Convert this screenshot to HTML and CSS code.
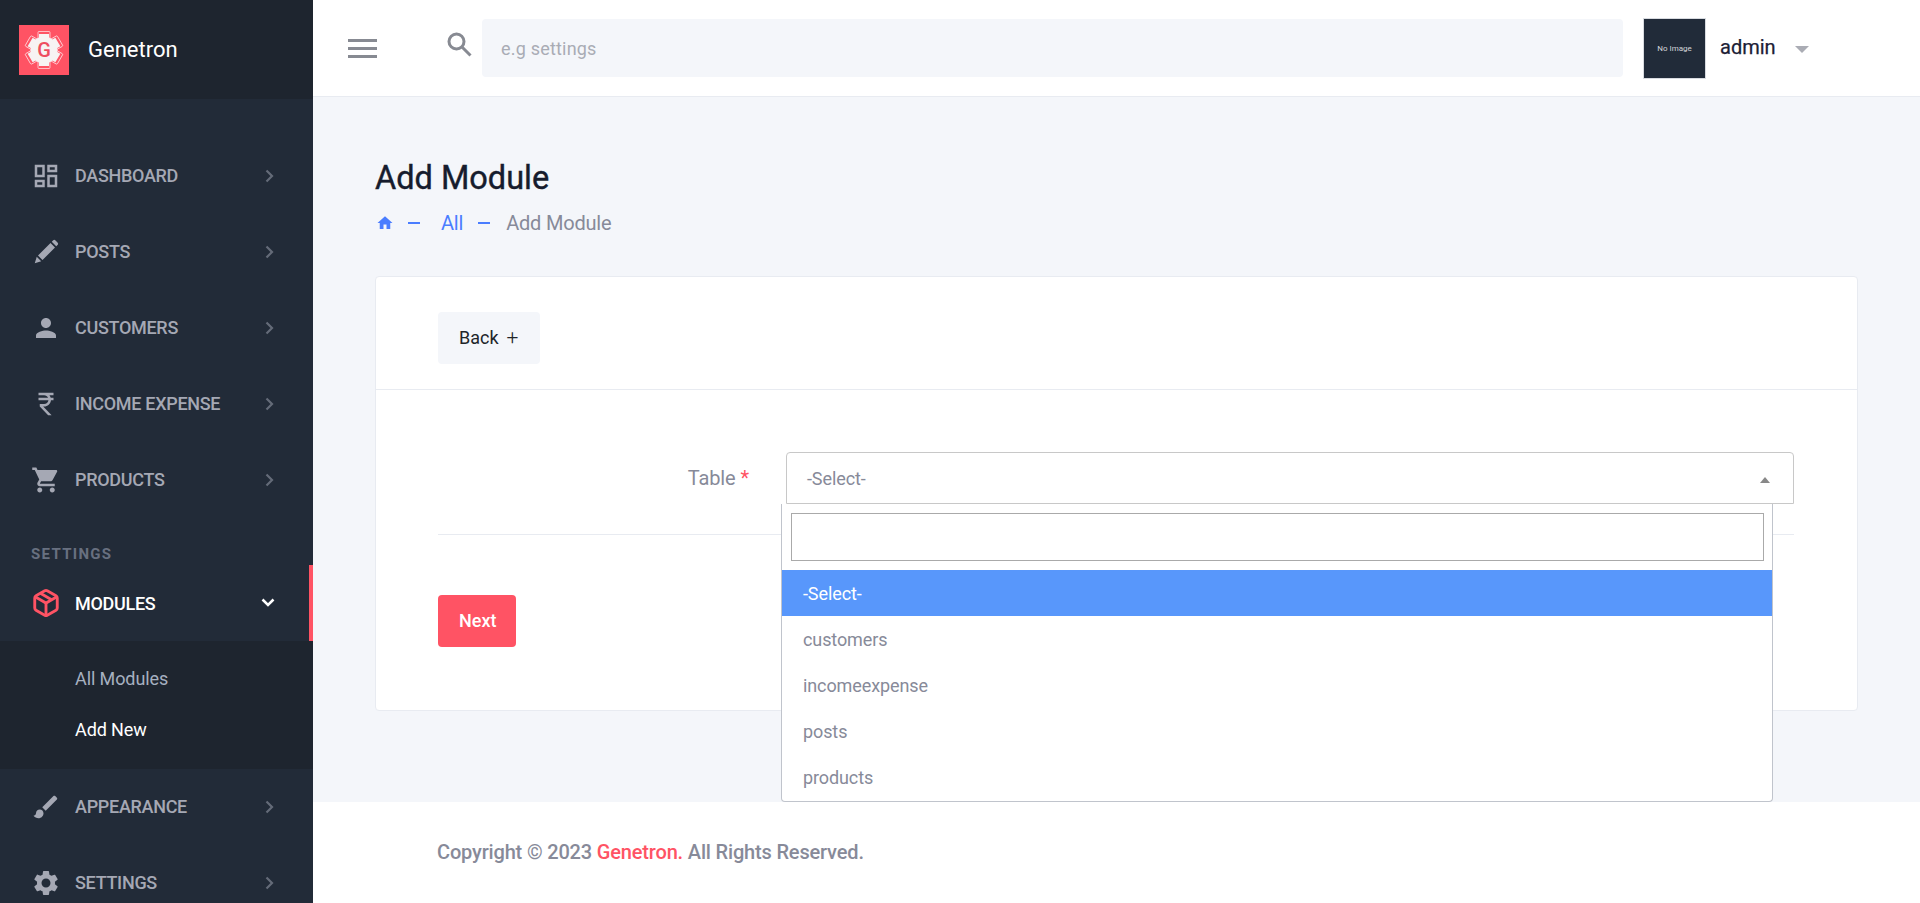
FILE: index.html
```html
<!DOCTYPE html>
<html lang="en">
<head>
<meta charset="utf-8">
<title>Add Module</title>
<link rel="stylesheet" href="styles.css">
</head>
<body>
<div class="app">
  <aside class="sidebar">
    <div class="brand">
      <div class="logo">
        <svg viewBox="0 0 50 50" width="50" height="50">
          <g class="logo-line">
            <rect x="19" y="6.500" width="12" height="37" rx="1"/>
            <rect x="19" y="6.500" width="12" height="37" rx="1" transform="rotate(60 25 25)"/>
            <rect x="19" y="6.500" width="12" height="37" rx="1" transform="rotate(120 25 25)"/>
          </g>
          <g class="logo-gear">
            <circle cx="25" cy="25" r="13.500"/>
            <rect x="20" y="9" width="10" height="32"/>
            <rect x="20" y="9" width="10" height="32" transform="rotate(60 25 25)"/>
            <rect x="20" y="9" width="10" height="32" transform="rotate(120 25 25)"/>
          </g>
          <text class="logo-g" x="25" y="32" text-anchor="middle">G</text>
        </svg>
      </div>
      <span class="brand-name">Genetron</span>
    </div>
    <nav class="menu">
      <a class="item"><svg class="ico" viewBox="0 0 24 24"><path d="M19 5v2h-4V5h4M9 5v6H5V5h4m10 8v6h-4v-6h4M9 17v2H5v-2h4M21 3h-8v6h8V3zM11 3H3v10h8V3zm10 8h-8v10h8V11zm-10 4H3v6h8v-6z"/></svg><span class="label">DASHBOARD</span><svg class="chev" viewBox="0 0 12 14"><path d="M2.500 1.500 8 7l-5.500 5.500"/></svg></a>
      <a class="item"><svg class="ico" viewBox="0 0 24 24"><path d="M3 21l1.600-5.200 3.600 3.600zM5.600 14.800l10-10 3.600 3.600-10 10zM16.600 3.800l1-1a1.400 1.400 0 0 1 2 0l1.600 1.600a1.400 1.400 0 0 1 0 2l-1 1z"/></svg><span class="label">POSTS</span><svg class="chev" viewBox="0 0 12 14"><path d="M2.500 1.500 8 7l-5.500 5.500"/></svg></a>
      <a class="item"><svg class="ico" viewBox="0 0 24 24"><path d="M12 12c2.210 0 4-1.790 4-4s-1.790-4-4-4-4 1.790-4 4 1.790 4 4 4zm0 2c-2.670 0-8 1.340-8 4v2h16v-2c0-2.660-5.330-4-8-4z"/></svg><span class="label">CUSTOMERS</span><svg class="chev" viewBox="0 0 12 14"><path d="M2.500 1.500 8 7l-5.500 5.500"/></svg></a>
      <a class="item"><svg class="ico" viewBox="0 0 24 24"><path d="M13.660 7C13.100 5.820 11.900 5 10.500 5H6V3h12v2h-3.260c.48.58.84 1.260 1.050 2H18v2h-2.020c-.25 2.800-2.610 5-5.480 5h-.73l6.730 7h-2.770L7 14v-2h3.500c1.760 0 3.220-1.300 3.460-3H6V7h7.660z"/></svg><span class="label">INCOME EXPENSE</span><svg class="chev" viewBox="0 0 12 14"><path d="M2.500 1.500 8 7l-5.500 5.500"/></svg></a>
      <a class="item"><svg class="ico" viewBox="0 0 24 24"><path d="M7 18c-1.100 0-1.990.9-1.990 2S5.900 22 7 22s2-.9 2-2-.9-2-2-2zM1 2v2h2l3.600 7.590-1.350 2.450c-.16.28-.25.61-.25.96 0 1.100.9 2 2 2h12v-2H7.420c-.14 0-.25-.11-.25-.25l.03-.12.9-1.630h7.450c.75 0 1.410-.41 1.750-1.030l3.580-6.490c.08-.14.12-.31.12-.48 0-.55-.45-1-1-1H5.210l-.94-2H1zm16 16c-1.100 0-1.990.9-1.990 2s.89 2 1.990 2 2-.9 2-2-.9-2-2-2z"/></svg><span class="label">PRODUCTS</span><svg class="chev" viewBox="0 0 12 14"><path d="M2.500 1.500 8 7l-5.500 5.500"/></svg></a>
      <div class="section">SETTINGS</div>
      <a class="item active"><svg class="ico ico-cube" viewBox="0 0 24 24"><path d="M21 16V8a2 2 0 0 0-1-1.730l-7-4a2 2 0 0 0-2 0l-7 4A2 2 0 0 0 3 8v8a2 2 0 0 0 1 1.730l7 4a2 2 0 0 0 2 0l7-4A2 2 0 0 0 21 16z"/><path d="M3.270 6.960 12 12.010l8.730-5.050"/><path d="M12 22.080V12"/><path d="M16.500 9.400 7.500 4.210"/></svg><span class="label">MODULES</span><svg class="chev" viewBox="0 0 14 12"><path d="M1.500 2.500 7 8l5.500-5.500"/></svg></a>
      <div class="submenu">
        <a class="sub">All Modules</a>
        <a class="sub current">Add New</a>
      </div>
      <a class="item"><svg class="ico" viewBox="0 0 24 24"><path d="M7 14c-1.660 0-3 1.340-3 3 0 1.310-1.160 2-2 2 .92 1.220 2.490 2 4 2 2.210 0 4-1.790 4-4 0-1.660-1.340-3-3-3zm13.710-9.370l-1.340-1.340c-.39-.39-1.020-.39-1.410 0L9 12.250 11.750 15l8.960-8.960c.39-.39.39-1.020 0-1.410z"/></svg><span class="label">APPEARANCE</span><svg class="chev" viewBox="0 0 12 14"><path d="M2.500 1.500 8 7l-5.500 5.500"/></svg></a>
      <a class="item"><svg class="ico" viewBox="0 0 24 24"><path d="M19.140 12.940c.04-.3.06-.61.06-.94 0-.32-.02-.64-.07-.94l2.030-1.580c.18-.14.23-.41.12-.61l-1.920-3.320c-.12-.22-.37-.29-.59-.22l-2.390.96c-.5-.38-1.030-.7-1.620-.94l-.36-2.540c-.04-.24-.24-.41-.48-.41h-3.840c-.24 0-.43.17-.47.41l-.36 2.540c-.59.24-1.130.57-1.620.94l-2.390-.96c-.22-.08-.47 0-.59.22L2.740 8.870c-.12.21-.08.47.12.61l2.030 1.580c-.05.3-.09.63-.09.94s.02.64.07.94l-2.030 1.580c-.18.14-.23.41-.12.61l1.920 3.320c.12.22.37.29.59.22l2.390-.96c.5.38 1.030.7 1.620.94l.36 2.540c.05.24.24.41.48.41h3.840c.24 0 .44-.17.47-.41l.36-2.540c.59-.24 1.130-.56 1.620-.94l2.390.96c.22.08.47 0 .59-.22l1.920-3.320c.12-.22.07-.47-.12-.61l-2.010-1.580zM12 15.600c-1.980 0-3.600-1.620-3.600-3.600s1.620-3.600 3.600-3.600 3.600 1.620 3.600 3.600-1.620 3.600-3.600 3.600z"/></svg><span class="label">SETTINGS</span><svg class="chev" viewBox="0 0 12 14"><path d="M2.500 1.500 8 7l-5.500 5.500"/></svg></a>
    </nav>
  </aside>
  <main class="main">
    <header class="topbar">
      <svg class="burger" viewBox="0 0 29 19"><path d="M0 0h29v3H0zM0 8h29v3H0zM0 16h29v3H0z"/></svg>
      <svg class="search-ico" viewBox="0 0 25 25"><circle cx="9.500" cy="9.500" r="7.500"/><path d="m15 15 8.500 8.500"/></svg>
      <div class="search">e.g settings</div>
      <div class="avatar">No Image</div>
      <span class="user">admin</span>
      <span class="caret"></span>
    </header>
    <section class="content">
      <h1 class="title">Add Module</h1>
      <div class="crumbs">
        <svg class="home" viewBox="0 0 24 24"><path d="M10 20v-6h4v6h5v-8h3L12 3 2 12h3v8z"/></svg>
        <span class="dash"></span>
        <a class="crumb-link">All</a>
        <span class="dash"></span>
        <span class="crumb-now">Add Module</span>
      </div>
      <div class="card">
        <div class="card-head"><a class="btn-back">Back<span class="plus">+</span></a></div>
        <div class="card-body">
          <div class="row">
            <label class="field-label">Table <span class="req">*</span></label>
            <div class="select">
              <span>-Select-</span>
              <span class="select-arrow"></span>
              <div class="dropdown">
                <div class="dd-search"><div class="dd-input"></div></div>
                <div class="opt opt-on">-Select-</div>
                <div class="opt">customers</div>
                <div class="opt">incomeexpense</div>
                <div class="opt">posts</div>
                <div class="opt">products</div>
              </div>
            </div>
          </div>
          <a class="btn-next">Next</a>
        </div>
      </div>
    </section>
    <footer class="footer">Copyright © 2023 <span class="accent">Genetron.</span> All Rights Reserved.</footer>
  </main>
</div>
</body>
</html>
```
FILE: styles.css
```css
* { box-sizing: border-box; }
html, body { margin: 0; height: 100%; overflow: hidden; }
body { font-family: Roboto, "Liberation Sans", sans-serif; font-size: 16px; color: #878a99; background: #f4f6fa; }
.app { display: flex; height: 903px; overflow: hidden; }

.sidebar { flex: 0 0 313px; background: #222b38; overflow: hidden; }
.brand { height: 99px; background: #1e252f; display: flex; align-items: center; padding-left: 19px; gap: 19px; }
.logo { width: 50px; height: 50px; background: #ff5364; display: flex; }
.logo-gear { fill: #f7f3f3; }
.logo-line { fill: none; stroke: #ffd9dd; stroke-width: .8; }
.logo-g { font: 500 20px Roboto, sans-serif; fill: #ee4d60; }
.brand-name { font-size: 22px; color: #fff; font-weight: 400; margin-top: -1px; }

.menu { padding-top: 39px; }
.item { display: flex; align-items: center; height: 76px; padding-left: 31px; color: #a5a8b4; font-weight: 500; font-size: 18px; }
.ico { width: 30px; height: 30px; fill: #a5a8b4; flex: none; margin-right: 14px; }
.label { flex: 1; letter-spacing: -.3px; margin-top: -1px; }
.chev { width: 12px; height: 14px; flex: none; margin-right: 37px; fill: none; stroke: #646b78; stroke-width: 2.200; }
.section { height: 47px; padding: 27px 0 0 31px; line-height: 19px; color: #687080; font-size: 15px; font-weight: 700; letter-spacing: 1.300px; }
.item.active { color: #fff; border-right: 4px solid #ff5364; }
.item.active .label { margin-top: 0; }
.item.active .ico { fill: none; stroke: #ff5364; stroke-width: 2.300; }
.item.active .chev { width: 14px; height: 12px; stroke: #fff; margin-right: 34px; stroke-width: 2.500; }
.submenu { height: 128px; background: #1e252f; padding-top: 12px; }
.sub { display: flex; align-items: center; height: 51px; padding-left: 75px; font-size: 18px; letter-spacing: -.1px; color: #a6b0c0; }
.sub.current { color: #fff; }

.main { flex: 1; min-width: 0; display: flex; flex-direction: column; }
.topbar { height: 97px; flex: none; background: #fff; border-bottom: 1px solid #e8ebf1; display: flex; align-items: center; padding-left: 35px; }
.burger { width: 29px; height: 19px; fill: #878a92; flex: none; margin-right: 70px; }
.search-ico { width: 25px; height: 25px; fill: none; stroke: #878a92; stroke-width: 3; flex: none; margin: -8px 10px 0 0; }
.search { width: 1141px; height: 58px; background: #f4f6fa; border-radius: 4px; margin-top: -1px; padding: 1px 0 0 19px; display: flex; align-items: center; color: #a9acb5; font-size: 18px; letter-spacing: .2px; flex: none; }
.avatar { width: 63px; height: 61px; margin-left: 20px; background: #212b39; color: #d4d6db; font-size: 8px; display: flex; align-items: center; justify-content: center; flex: none; border: 1px solid #d8dbe0; }
.user { margin-left: 14px; font-size: 20px; font-weight: 400; -webkit-text-stroke: .25px #1c2035; color: #1c2035; margin-top: -3px; width: 75px; }
.caret { width: 0; height: 0; border-style: solid; border-width: 7px 7px 0; border-color: #aaacb4 transparent transparent; margin-top: 3px; }

.content { flex: 1; padding: 62px 62px 0; position: relative; }
.title { margin: 0; font-size: 32.500px; font-weight: 400; -webkit-text-stroke: .4px #161c2d; line-height: 38px; color: #161c2d; }
.crumbs { display: flex; align-items: center; height: 28px; margin-top: 12px; font-size: 20px; letter-spacing: -.2px; padding-left: 1px; }
.home { width: 18px; height: 18px; fill: #4a7dff; flex: none; }
.dash { width: 12px; height: 2px; background: #4a7dff; flex: none; margin: 0 21px 0 14px; }
.crumb-link { color: #4a7dff; margin-right: 1px; }
.crumb-now { color: #878a99; margin-left: -5px; }
.card { margin-top: 39px; height: 435px; background: #fff; border: 1px solid #e8ebf1; border-radius: 4px; }
.card-head { height: 113px; padding: 35px 0 0 62px; border-bottom: 1px solid #e8ebf1; }
.btn-back { display: inline-flex; align-items: center; height: 52px; padding: 0 22px 2px 21px; background: #f4f6fa; border-radius: 4px; color: #212529; font-size: 18px; }
.plus { margin-left: 8px; font-size: 21px; font-weight: 300; }
.card-body { padding: 62px 63px 0 62px; }
.row { display: flex; height: 83px; border-bottom: 1px solid #e8ebf1; }
.field-label { width: 311px; height: 52px; line-height: 52px; text-align: right; font-size: 20px; letter-spacing: -.1px; color: #878a99; flex: none; }
.req { color: #ff5364; }
.select { position: relative; margin-left: 37px; width: 1008px; height: 52px; border: 1px solid #c8c8c8; border-radius: 4px 4px 0 0; padding-left: 20px; line-height: 51px; font-size: 18px; letter-spacing: -.1px; color: #878a99; }
.select-arrow { position: absolute; right: 23px; top: 24px; width: 0; height: 0; border-style: solid; border-width: 0 5px 6px; border-color: transparent transparent #888; }
.dropdown { position: absolute; left: -6px; top: 51px; width: 992px; height: 298px; background: #fff; border: 1px solid #c0c4cc; border-top: 0; border-radius: 0 0 4px 4px; line-height: normal; z-index: 5; }
.dd-search { height: 66px; padding: 9px 8px 0 9px; }
.dd-input { height: 48px; border: 1px solid #aaa; }
.opt { height: 46px; padding-left: 21px; display: flex; align-items: center; font-size: 18px; color: #878a99; }
.opt-on { background: #5897fb; color: #fff; }
.btn-next { display: inline-flex; align-items: center; margin-top: 60px; height: 52px; padding: 0 20px 1px 21px; background: #ff5364; border-radius: 4px; color: #fff; font-weight: 500; font-size: 18px; }

.footer { flex: none; height: 101px; background: #fff; display: flex; align-items: center; padding: 0 0 1px 124px; font-size: 20px; letter-spacing: -.17px; font-weight: 500; color: #878a99; white-space: pre; }
.accent { color: #ff5364; }
```
